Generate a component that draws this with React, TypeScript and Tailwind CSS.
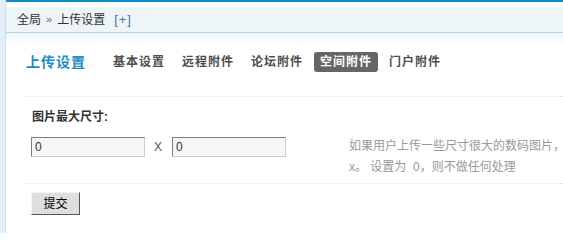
const cjk = { fontFamily: '"Liberation Sans", "Noto Sans CJK SC", sans-serif' }

const tabs = ["基本设置", "远程附件", "论坛附件", "空间附件", "门户附件"]

function SizeInput({ value }: { value: string }) {
  return (
    <input
      readOnly
      value={value}
      className="w-[114px] h-[20px] border border-t-[#7d7d7d] border-l-[#7d7d7d] border-r-[#cccccc] border-b-[#cccccc] bg-[#f6f6f6] px-[3px] text-[12px] text-[#333] outline-none"
      style={cjk}
    />
  )
}

export default function App() {
  return (
    <div className="flex w-[563px] h-[233px] overflow-hidden bg-white text-[12px] text-[#333]" style={cjk}>
      <div className="w-[6px] shrink-0 bg-[#e3eef7] border-r border-[#cadeec]" />
      <div className="flex-1 min-w-0 flex flex-col">
        <div className="h-[2px] bg-[#0a8cce]" />
        <div className="h-[5px] bg-white" />
        <div className="h-[26px] bg-[#eef5f9] border-b border-[#b7d3dd] flex items-center pl-[11px] whitespace-nowrap">
          <span>全局</span>
          <span className="mx-[5px] text-[11px] text-[#666]">»</span>
          <span>上传设置</span>
          <span className="ml-[9px] text-[13px] tracking-[1px] text-[#4a72a6]">[+]</span>
        </div>
        <div className="h-[10px] bg-gradient-to-b from-[#edf3fa] to-white" />

        <div className="flex items-center h-[20px] mt-[9px] pl-[20px] whitespace-nowrap">
          <span className="text-[14px] font-bold tracking-[1px] text-[#1e8bc3]">上传设置</span>
          <div className="flex items-center gap-[5px] ml-[21px]">
            {tabs.map((t) => (
              <span
                key={t}
                className={
                  t === "空间附件"
                    ? "h-[20px] flex items-center px-[6px] rounded-[3px] bg-[#666] text-white font-bold tracking-[1px]"
                    : "h-[20px] flex items-center px-[6px] text-[#4d4d4d] font-bold tracking-[1px]"
                }
              >
                {t}
              </span>
            ))}
          </div>
        </div>

        <div className="ml-[19px] mt-[24px] border-t border-dotted border-[#e4e4e4]">
          <div className="pl-[7px] pt-[13px] leading-[14px] font-bold text-[#333]">图片最大尺寸:</div>
          <div className="flex items-start pl-[6px] mt-[12px] pb-[5px] whitespace-nowrap">
            <div className="flex items-center mt-[1px]">
              <SizeInput value="0" />
              <span className="ml-[9px] text-[#555]">X</span>
              <span className="ml-[10px]">
                <SizeInput value="0" />
              </span>
            </div>
            <div className="ml-[63px] leading-[21px] text-[#999]">
              <div>如果用户上传一些尺寸很大的数码图片，则程序将按照本设置进行缩放处理</div>
              <div>x。 设置为&nbsp; 0，则不做任何处理</div>
            </div>
          </div>
          <div className="border-t border-dotted border-[#e4e4e4] pt-[8px] pl-[6px]">
            <button
              className="w-[49px] h-[23px] bg-[#dedede] border border-t-[#f2f2f2] border-l-[#f2f2f2] border-r-[#555] border-b-[#555] text-[12px] text-black"
              style={cjk}
            >
              提交
            </button>
          </div>
        </div>
      </div>
    </div>
  )
}
